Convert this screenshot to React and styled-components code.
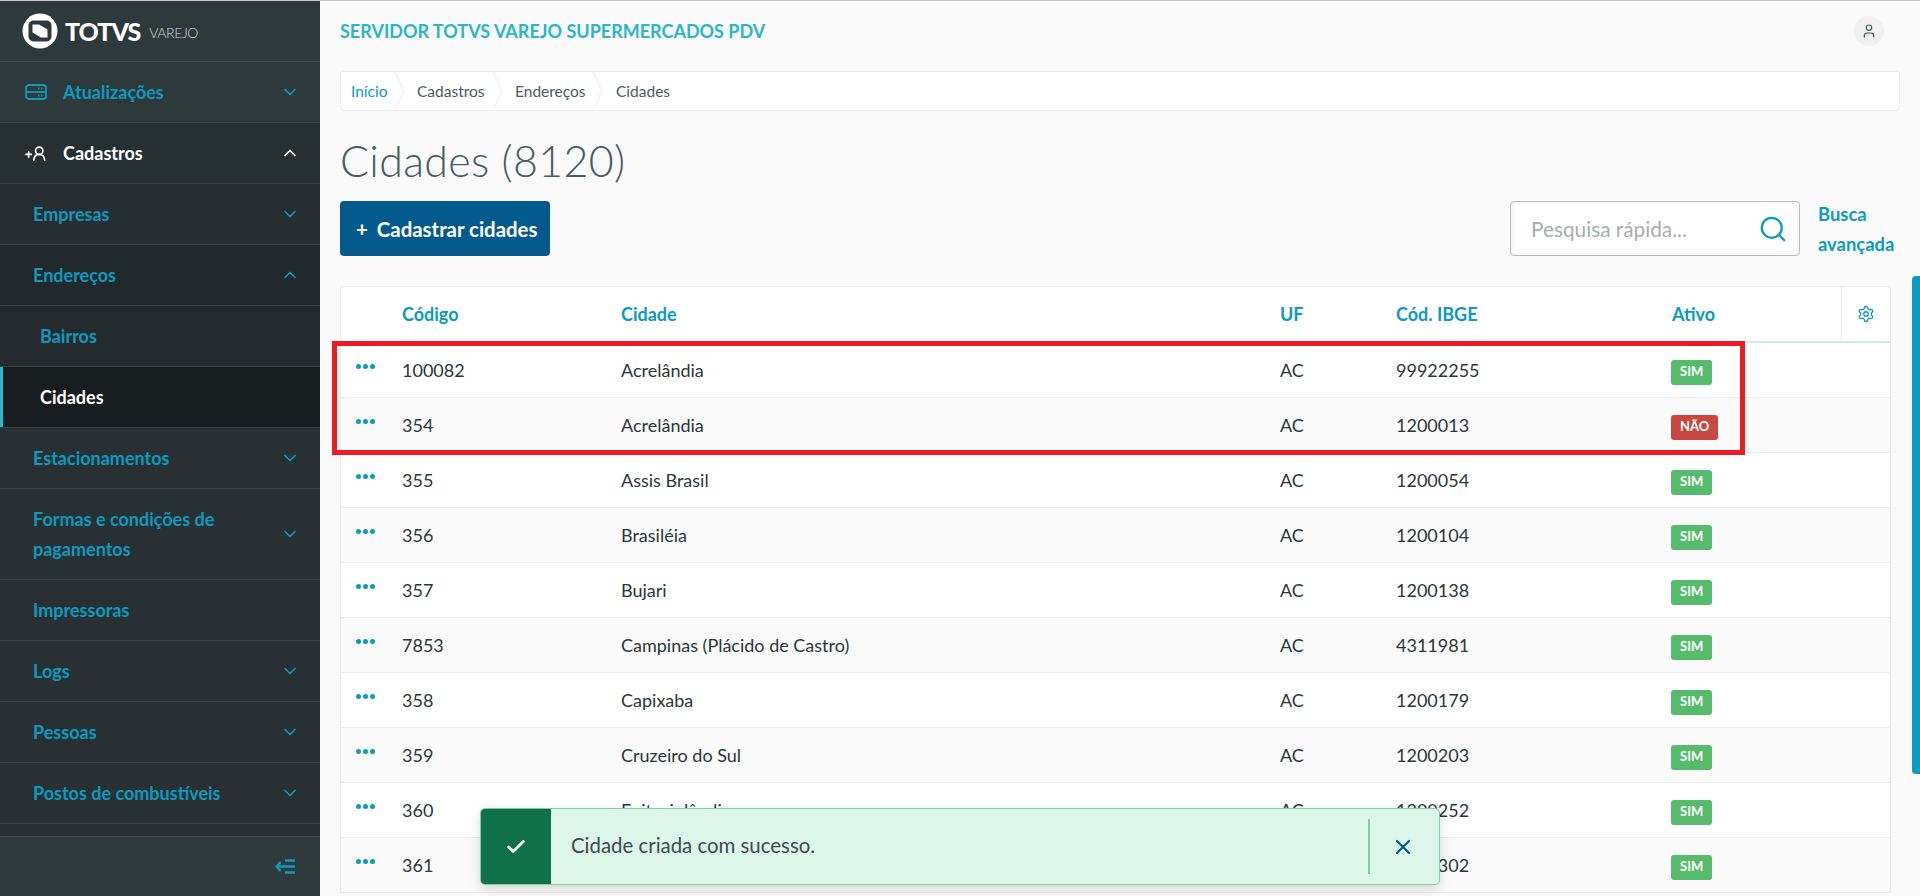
import React from "react";
import styled, { createGlobalStyle } from "styled-components";
import { ChevronDown, ChevronUp, Search, Settings, User, X, Check } from "lucide-react";

const FONT = `"Lato", "Open Sans", sans-serif`;
const BLUE = "#0c9abe";

const GlobalStyle = createGlobalStyle`
	html, body {
		margin: 0;
		padding: 0;
		height: 100%;
		overflow: hidden;
		font-family: ${FONT};
	}
	* {
		box-sizing: border-box;
	}
`;

const Page = styled.div`
	position: relative;
	display: flex;
	width: 1920px;
	height: 896px;
	overflow: hidden;
	border-top: 1px solid #c9c9c9;
	background: #fafafa;
`;

/* sidebar */
const Sidebar = styled.aside`
	display: flex;
	flex-direction: column;
	flex: 0 0 320px;
	background: #283033;
`;

const LogoRow = styled.div`
	display: flex;
	align-items: center;
	height: 61px;
	padding: 0 0 0 22px;
	background: #2e393b;
	border-bottom: 1px solid #3a4649;
`;

const LogoName = styled.span`
	margin-left: 7px;
	color: #fff;
	font-size: 25px;
	font-weight: 900;
	letter-spacing: -1px;
`;

const LogoSub = styled.span`
	margin: 2px 0 0 9px;
	color: #d5dadb;
	font-size: 14px;
	font-weight: 300;
	letter-spacing: -0.4px;
`;

const Menu = styled.nav`
	flex: 1;
	overflow: hidden;
`;

const MenuRow = styled.div`
	position: relative;
	display: flex;
	align-items: center;
	justify-content: space-between;
	min-height: ${p => (p.$tall ? 91 : 61)}px;
	padding: 0 20px 0 ${p => p.$indent}px;
	background: ${p => p.$bg || "#283033"};
	border-bottom: 1px solid #364245;
	color: ${p => (p.$white ? "#fff" : BLUE)};
	font-size: 18px;
	font-weight: 700;
	line-height: 30px;
`;

const ActiveMark = styled.span`
	position: absolute;
	left: 0;
	top: 0;
	bottom: 0;
	width: 3px;
	background: #29b6c5;
`;

const MenuLabel = styled.span`
	display: flex;
	align-items: center;
	gap: 16px;
	max-width: 230px;
`;

const IconSlot = styled.span`
	display: flex;
	width: 22px;
`;

const SidebarFooter = styled.div`
	display: flex;
	align-items: center;
	justify-content: flex-end;
	height: 60px;
	padding-right: 25px;
	background: #2e3a3c;
	border-top: 1px solid #3d494c;
`;

/* main column */
const Main = styled.main`
	flex: 1;
	min-width: 0;
	padding: 0 20px;
`;

const TopBar = styled.header`
	display: flex;
	align-items: center;
	justify-content: space-between;
	height: 60px;
	padding-right: 16px;
`;

const ServerName = styled.h2`
	margin: 0;
	color: #29b6c5;
	font-size: 18px;
	font-weight: 700;
`;

const Avatar = styled.span`
	display: flex;
	align-items: center;
	justify-content: center;
	width: 30px;
	height: 30px;
	border-radius: 50%;
	background: #f1f1f1;
	color: #4a5c60;
`;

const Breadcrumb = styled.ol`
	display: flex;
	align-items: stretch;
	height: 40px;
	margin: 10px 0 0;
	padding: 0;
	list-style: none;
	background: #fff;
	border: 1px solid #ececec;
	border-radius: 4px;
	font-size: 15.5px;
`;

const Crumb = styled.li`
	position: relative;
	display: flex;
	align-items: center;
	width: ${p => p.$width}px;
	padding-left: ${p => p.$pad}px;
	color: ${p => (p.$link ? BLUE : "#4a5c60")};
`;

const CrumbArrow = styled.svg`
	position: absolute;
	top: 0;
	right: 0;
	width: 11px;
	height: 38px;
`;

const Title = styled.h1`
	margin: 22px 0 0;
	color: #4a5c60;
	font-size: 43px;
	font-weight: 300;
	line-height: 55px;
	letter-spacing: 0.3px;
`;

const Toolbar = styled.div`
	display: flex;
	align-items: center;
	justify-content: space-between;
	height: 55px;
	margin-top: 13px;
`;

const PrimaryButton = styled.button`
	display: flex;
	align-items: center;
	gap: 9px;
	width: 210px;
	height: 55px;
	padding: 0 0 0 16px;
	border: 0;
	border-radius: 4px;
	background: #045a8d;
	color: #fff;
	font-family: ${FONT};
	font-size: 20.4px;
	font-weight: 700;
`;

const SearchArea = styled.div`
	display: flex;
	align-items: center;
	gap: 18px;
`;

const SearchBox = styled.div`
	display: flex;
	align-items: center;
	justify-content: space-between;
	width: 290px;
	height: 55px;
	padding: 0 11px 0 20px;
	background: #fff;
	border: 1px solid #b5bcbd;
	border-radius: 4px;
	box-shadow: inset 0 0 6px rgba(0, 0, 0, 0.08);
	color: #a8aeaf;
	font-size: 20.8px;
`;

const AdvancedLink = styled.a`
	width: 82px;
	color: ${BLUE};
	font-size: 18.4px;
	font-weight: 700;
	line-height: 30px;
`;

const Table = styled.div`
	margin: 30px 9px 0 0;
	background: #fff;
	border: 1px solid #ececec;
	border-bottom: 0;
	border-radius: 4px 4px 0 0;
	font-size: 18px;
`;

const Columns = styled.div`
	display: grid;
	grid-template-columns: 61px 219px 659px 116px 276px 169px 1fr;
	align-items: center;
`;

const HeadRow = styled(Columns)`
	height: 56px;
	border-bottom: 2px solid #cdeaf3;
	color: ${BLUE};
	font-weight: 700;
`;

const SettingsCell = styled.div`
	display: flex;
	align-items: center;
	justify-content: center;
	height: 54px;
	border-left: 1px solid #ececec;
	color: ${BLUE};
`;

const BodyRow = styled(Columns)`
	height: 55px;
	padding-bottom: 1px;
	background: ${p => (p.$even ? "#fafafa" : "#fff")};
	border-bottom: 1px solid #ececec;
	color: #2c3739;
`;

const Dots = styled.span`
	display: flex;
	gap: 2px;
	margin: -7px 0 0 15px;
`;

const Dot = styled.i`
	width: 5px;
	height: 5px;
	border-radius: 50%;
	background: ${BLUE};
`;

const Badge = styled.span`
	display: block;
	width: fit-content;
	height: 25px;
	margin: 6px 0 0 -1px;
	padding: 0 9px;
	border-radius: 3px;
	background: ${p => (p.$on ? "#57bb6e" : "#c64840")};
	color: #fff;
	font-size: 13px;
	font-weight: 700;
	line-height: 23px;
`;

/* things lying over the page */
const RedFrame = styled.div`
	position: absolute;
	left: 332px;
	top: 340px;
	width: 1413px;
	height: 114px;
	border: 5px solid #ed1c24;
	pointer-events: none;
`;

const Scrollbar = styled.div`
	position: absolute;
	right: 0;
	top: 275px;
	width: 8px;
	height: 498px;
	border-radius: 4px 0 0 4px;
	background: ${BLUE};
`;

const Toast = styled.div`
	position: absolute;
	left: 480px;
	top: 807px;
	display: flex;
	align-items: center;
	width: 960px;
	height: 77px;
	overflow: hidden;
	background: #dcf6ea;
	border: 1px solid #7ccfa9;
	border-radius: 5px;
	box-shadow: 0 4px 12px rgba(0, 0, 0, 0.14);
`;

const ToastIcon = styled.span`
	display: flex;
	align-items: center;
	justify-content: center;
	align-self: stretch;
	flex: 0 0 70px;
	background: #0f7049;
	color: #fff;
`;

const ToastText = styled.span`
	flex: 1;
	padding: 0 0 3px 20px;
	color: #3d4a4c;
	font-size: 20.4px;
`;

const ToastClose = styled.span`
	display: flex;
	align-items: center;
	justify-content: center;
	width: 71px;
	height: 55px;
	padding-right: 4px;
	border-left: 2px solid #7ccfa9;
	color: #045a8d;
`;

const LogoMark = () => (
	<svg width="36" height="36" viewBox="-18 -18 36 36">
		<circle r="17.5" fill="#fff" />
		<rect x="-11.5" y="-10.5" width="23" height="21" rx="5" fill="#2e393b" />
		<path d="M-7.5 -6.5 L-1 -6.5 L7.5 -1.5 L7.5 6.5 L1 6.5 L-7.5 1.5 Z" fill="#fff" />
	</svg>
);

const ServerIcon = () => (
	<svg width="22" height="16" viewBox="0 0 22 16" fill="none" stroke="currentColor" strokeWidth="1.8">
		<rect x="1" y="1" width="20" height="14" rx="3" />
		<path d="M1 8h20" />
		<path d="M13 4.5h1.5M16 4.5h1.5M13 11.5h1.5M16 11.5h1.5" strokeWidth="1.4" />
	</svg>
);

const AddUserIcon = () => (
	<svg width="24" height="17" viewBox="0 0 24 17" fill="none" stroke="#fff" strokeWidth="1.8" strokeLinecap="round">
		<path d="M1 9.5h6M4 6.5v6" />
		<circle cx="15.5" cy="5.5" r="4" />
		<path d="M9.5 16c.3-4 2.8-6.5 6-6.5s5.7 2.5 6 6.5" />
	</svg>
);

const CollapseIcon = () => (
	<svg width="20" height="15" viewBox="0 0 20 15" fill="none" stroke={BLUE} strokeWidth="2.4">
		<path d="M5.5 3 L1.5 7.5 L5.5 12" />
		<path d="M2 7.5H20M10 1.5H20M10 13.5H20" />
	</svg>
);

const menu = [
	{ label: "Atualizações", indent: 25, bg: "#2e393b", icon: <ServerIcon />, chevron: "down" },
	{ label: "Cadastros", indent: 25, bg: "#263033", icon: <AddUserIcon />, chevron: "up", white: true },
	{ label: "Empresas", indent: 33, bg: "#262e31", chevron: "down" },
	{ label: "Endereços", indent: 33, bg: "#22292c", chevron: "up" },
	{ label: "Bairros", indent: 40, bg: "#232b2e" },
	{ label: "Cidades", indent: 40, bg: "#171c1f", white: true, active: true },
	{ label: "Estacionamentos", indent: 33, chevron: "down" },
	{ label: "Formas e condições de pagamentos", indent: 33, chevron: "down", tall: true },
	{ label: "Impressoras", indent: 33 },
	{ label: "Logs", indent: 33, chevron: "down" },
	{ label: "Pessoas", indent: 33, chevron: "down" },
	{ label: "Postos de combustíveis", indent: 33, chevron: "down" }
];

const crumbs = [
	{ label: "Início", width: 64, pad: 10, link: true, arrow: true },
	{ label: "Cadastros", width: 98, pad: 12, arrow: true },
	{ label: "Endereços", width: 100, pad: 12, arrow: true },
	{ label: "Cidades", width: 100, pad: 13 }
];

const rows = [
	["100082", "Acrelândia", "99922255", true],
	["354", "Acrelândia", "1200013", false],
	["355", "Assis Brasil", "1200054", true],
	["356", "Brasiléia", "1200104", true],
	["357", "Bujari", "1200138", true],
	["7853", "Campinas (Plácido de Castro)", "4311981", true],
	["358", "Capixaba", "1200179", true],
	["359", "Cruzeiro do Sul", "1200203", true],
	["360", "Epitaciolândia", "1200252", true],
	["361", "Feijó", "1200302", true]
];

const SidebarMenu = () => (
	<Sidebar>
		<LogoRow>
			<LogoMark />
			<LogoName>TOTVS</LogoName>
			<LogoSub>VAREJO</LogoSub>
		</LogoRow>
		<Menu>
			{menu.map(item => (
				<MenuRow key={item.label} $indent={item.indent} $bg={item.bg} $white={item.white} $tall={item.tall}>
					{item.active && <ActiveMark />}
					<MenuLabel>
						{item.icon && <IconSlot>{item.icon}</IconSlot>}
						<span>{item.label}</span>
					</MenuLabel>
					{item.chevron === "down" && <ChevronDown size={20} strokeWidth={2} />}
					{item.chevron === "up" && <ChevronUp size={20} strokeWidth={2} />}
				</MenuRow>
			))}
		</Menu>
		<SidebarFooter>
			<CollapseIcon />
		</SidebarFooter>
	</Sidebar>
);

const CitiesTable = () => (
	<Table>
		<HeadRow>
			<span />
			<span>Código</span>
			<span>Cidade</span>
			<span>UF</span>
			<span>Cód. IBGE</span>
			<span>Ativo</span>
			<SettingsCell>
				<Settings size={18} strokeWidth={1.8} />
			</SettingsCell>
		</HeadRow>
		{rows.map(([code, city, ibge, on], index) => (
			<BodyRow key={code} $even={index % 2 === 1}>
				<Dots>
					<Dot />
					<Dot />
					<Dot />
				</Dots>
				<span>{code}</span>
				<span>{city}</span>
				<span>AC</span>
				<span>{ibge}</span>
				<span>
					<Badge $on={on}>{on ? "SIM" : "NÃO"}</Badge>
				</span>
				<span />
			</BodyRow>
		))}
	</Table>
);

export default function App() {
	return (
		<Page>
			<GlobalStyle />
			<SidebarMenu />
			<Main>
				<TopBar>
					<ServerName>SERVIDOR TOTVS VAREJO SUPERMERCADOS PDV</ServerName>
					<Avatar>
						<User size={16} strokeWidth={1.8} />
					</Avatar>
				</TopBar>
				<Breadcrumb>
					{crumbs.map(crumb => (
						<Crumb key={crumb.label} $width={crumb.width} $pad={crumb.pad} $link={crumb.link}>
							{crumb.label}
							{crumb.arrow && (
								<CrumbArrow viewBox="0 0 11 38" fill="none" stroke="#ececec">
									<path d="M1 0 L10 19 L1 38" />
								</CrumbArrow>
							)}
						</Crumb>
					))}
				</Breadcrumb>
				<Title>Cidades (8120)</Title>
				<Toolbar>
					<PrimaryButton>
						<span>+</span>
						<span>Cadastrar cidades</span>
					</PrimaryButton>
					<SearchArea>
						<SearchBox>
							<span>Pesquisa rápida...</span>
							<Search size={30} color={BLUE} strokeWidth={1.8} />
						</SearchBox>
						<AdvancedLink>Busca avançada</AdvancedLink>
					</SearchArea>
				</Toolbar>
				<CitiesTable />
			</Main>
			<RedFrame />
			<Scrollbar />
			<Toast>
				<ToastIcon>
					<Check size={22} strokeWidth={3} />
				</ToastIcon>
				<ToastText>Cidade criada com sucesso.</ToastText>
				<ToastClose>
					<X size={24} strokeWidth={2.2} />
				</ToastClose>
			</Toast>
		</Page>
	);
}
